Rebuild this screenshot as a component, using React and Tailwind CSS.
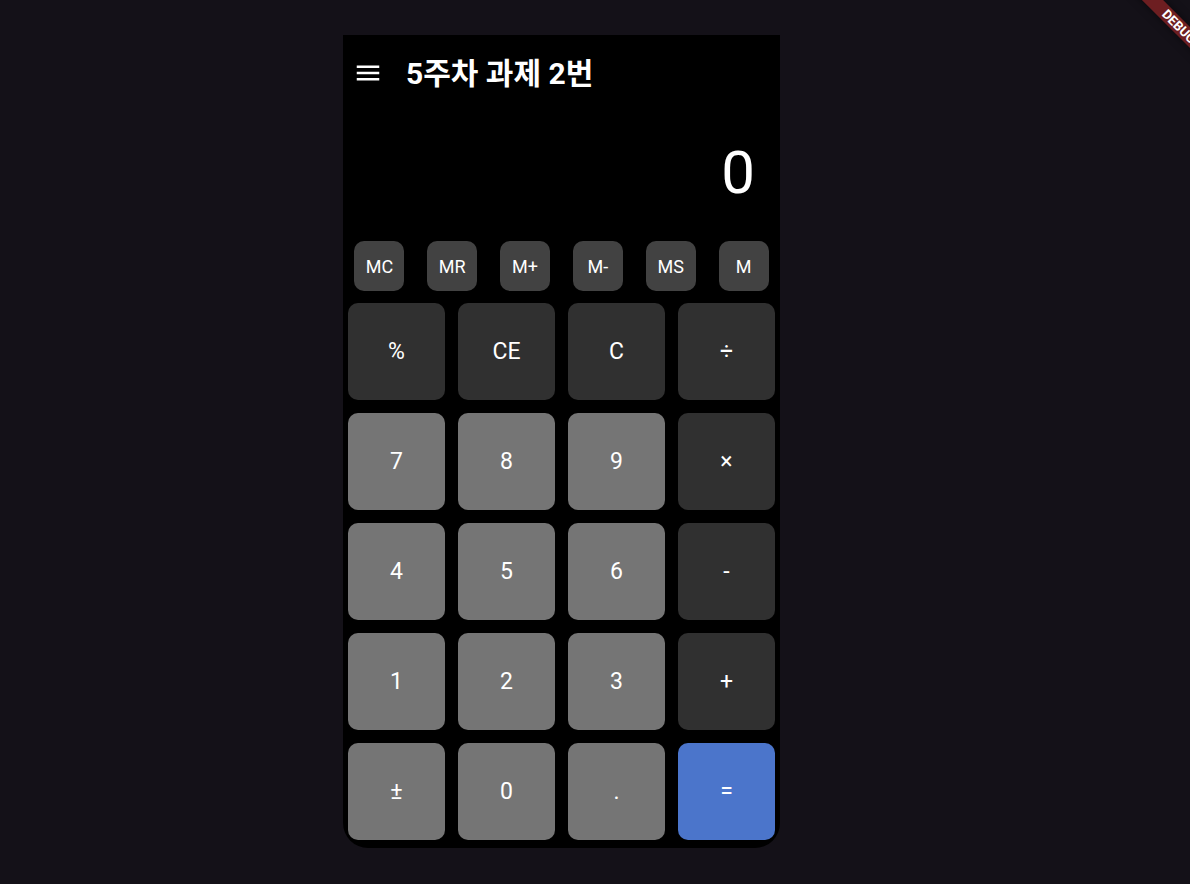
import React from "react";

const memoryKeys = ["MC", "MR", "M+", "M-", "MS", "M"];

const keys = [
  { label: "%", kind: "action" },
  { label: "CE", kind: "action" },
  { label: "C", kind: "action" },
  { label: "÷", kind: "action" },
  { label: "7", kind: "digit" },
  { label: "8", kind: "digit" },
  { label: "9", kind: "digit" },
  { label: "×", kind: "action" },
  { label: "4", kind: "digit" },
  { label: "5", kind: "digit" },
  { label: "6", kind: "digit" },
  { label: "-", kind: "action" },
  { label: "1", kind: "digit" },
  { label: "2", kind: "digit" },
  { label: "3", kind: "digit" },
  { label: "+", kind: "action" },
  { label: "±", kind: "digit" },
  { label: "0", kind: "digit" },
  { label: ".", kind: "digit" },
  { label: "=", kind: "equals" },
];

const keyColors = {
  action: "bg-[#303030]",
  digit: "bg-[#757575]",
  equals: "bg-[#4b75cb]",
};

function MenuIcon() {
  return (
    <svg viewBox="0 0 24 24" className="size-[30px]" fill="currentColor" aria-hidden="true">
      <path d="M3 18h18v-2H3v2zm0-5h18v-2H3v2zm0-7v2h18V6H3z" />
    </svg>
  );
}

function DebugBanner() {
  return (
    <div className="absolute top-[19px] -right-16 flex h-[15px] w-[150px] rotate-45 items-center justify-center bg-[#6d1e21] text-[13px] leading-none font-bold shadow-[0_0_8px_rgba(0,0,0,0.5)]">
      DEBUG
    </div>
  );
}

export default function App() {
  return (
    <div className="relative min-h-screen overflow-hidden bg-[#141118] pt-[35px] pr-[67px] pb-9 font-['Roboto','Noto_Sans_CJK_KR',sans-serif] text-white">
      <main className="mx-auto max-w-[437px] rounded-b-[25px] bg-black pb-2">
        <header className="flex h-[76px] items-center gap-[23px] px-[10px]">
          <button type="button" aria-label="메뉴">
            <MenuIcon />
          </button>
          <h1 className="pt-[2px] text-[30px] leading-9 font-bold">5주차 과제 2번</h1>
        </header>

        <div className="flex h-[124px] items-center justify-end px-[25px]">
          <output className="text-[60px] leading-none">0</output>
        </div>

        <div className="flex justify-around pt-[6px]">
          {memoryKeys.map((label) => (
            <button
              key={label}
              type="button"
              className="size-[50px] rounded-[10px] bg-[#424242] text-[18px]"
            >
              {label}
            </button>
          ))}
        </div>

        <div className="grid grid-cols-4 gap-[13px] px-[5px] pt-3">
          {keys.map(({ label, kind }) => (
            <button
              key={label}
              type="button"
              className={`aspect-square rounded-[10px] pt-[2px] text-[23px] ${keyColors[kind]}`}
            >
              {label}
            </button>
          ))}
        </div>
      </main>
      <DebugBanner />
    </div>
  );
}
